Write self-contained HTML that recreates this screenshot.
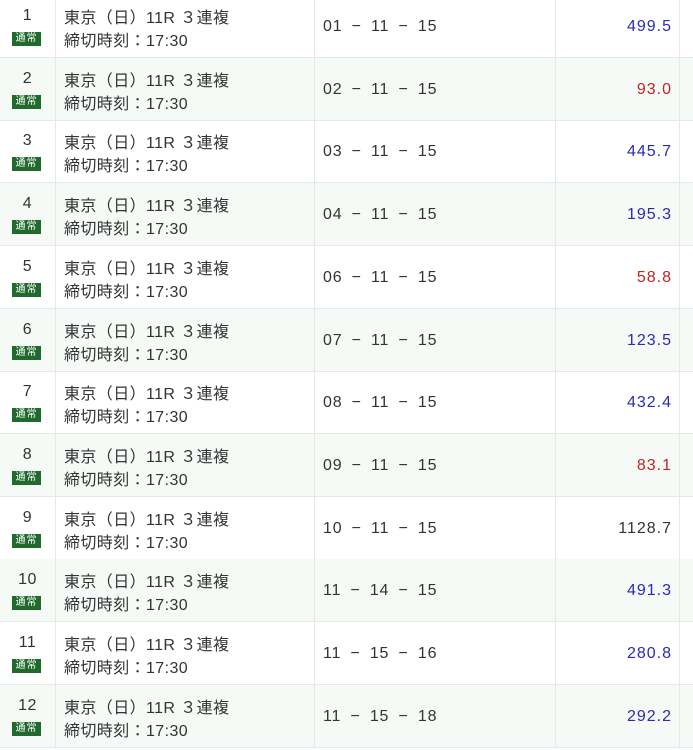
<!DOCTYPE html>
<html><head><meta charset="utf-8"><style>
body{margin:0;width:693px;height:750px;overflow:hidden;background:#fff;font-family:"Liberation Sans","Noto Sans CJK JP",sans-serif;color:#333;}
.r{position:absolute;left:0;width:693px;height:62px;border-bottom:1px solid #e6e9e6;}
.r.e{background:#f6faf6;}
.v{position:absolute;top:0;height:63px;width:1px;background:#e6e9e6;}
.n{position:absolute;left:0;width:55px;text-align:center;top:12px;font-size:16px;letter-spacing:0.5px;}
.b{position:absolute;left:12px;top:37px;width:29px;height:14px;background:#1f6a2c;color:#fff;font-size:10px;line-height:14px;text-align:center;letter-spacing:1px;}
.t{position:absolute;left:64px;top:12px;font-size:16px;line-height:23px;letter-spacing:0.4px;}
.c{position:absolute;left:323px;top:23px;font-size:16px;word-spacing:4px;letter-spacing:0.8px;}
.o{position:absolute;right:21px;top:23px;font-size:16px;letter-spacing:1px;}
.bl{color:#2a2ab8}.rd{color:#c02525}
</style></head><body>
<div class="r" style="top:-5px"><div class="v" style="left:55px"></div><div class="v" style="left:314px"></div><div class="v" style="left:555px"></div><div class="v" style="left:679px"></div><div class="n">1</div><div class="b">通常</div><div class="t">東京（日）11R ３連複<br>締切時刻：17:30</div><div class="c">01 − 11 − 15</div><div class="o bl">499.5</div></div>
<div class="r e" style="top:57.7px"><div class="v" style="left:55px"></div><div class="v" style="left:314px"></div><div class="v" style="left:555px"></div><div class="v" style="left:679px"></div><div class="n">2</div><div class="b">通常</div><div class="t">東京（日）11R ３連複<br>締切時刻：17:30</div><div class="c">02 − 11 − 15</div><div class="o rd">93.0</div></div>
<div class="r" style="top:120.4px"><div class="v" style="left:55px"></div><div class="v" style="left:314px"></div><div class="v" style="left:555px"></div><div class="v" style="left:679px"></div><div class="n">3</div><div class="b">通常</div><div class="t">東京（日）11R ３連複<br>締切時刻：17:30</div><div class="c">03 − 11 − 15</div><div class="o bl">445.7</div></div>
<div class="r e" style="top:183.1px"><div class="v" style="left:55px"></div><div class="v" style="left:314px"></div><div class="v" style="left:555px"></div><div class="v" style="left:679px"></div><div class="n">4</div><div class="b">通常</div><div class="t">東京（日）11R ３連複<br>締切時刻：17:30</div><div class="c">04 − 11 − 15</div><div class="o bl">195.3</div></div>
<div class="r" style="top:245.8px"><div class="v" style="left:55px"></div><div class="v" style="left:314px"></div><div class="v" style="left:555px"></div><div class="v" style="left:679px"></div><div class="n">5</div><div class="b">通常</div><div class="t">東京（日）11R ３連複<br>締切時刻：17:30</div><div class="c">06 − 11 − 15</div><div class="o rd">58.8</div></div>
<div class="r e" style="top:308.5px"><div class="v" style="left:55px"></div><div class="v" style="left:314px"></div><div class="v" style="left:555px"></div><div class="v" style="left:679px"></div><div class="n">6</div><div class="b">通常</div><div class="t">東京（日）11R ３連複<br>締切時刻：17:30</div><div class="c">07 − 11 − 15</div><div class="o bl">123.5</div></div>
<div class="r" style="top:371.2px"><div class="v" style="left:55px"></div><div class="v" style="left:314px"></div><div class="v" style="left:555px"></div><div class="v" style="left:679px"></div><div class="n">7</div><div class="b">通常</div><div class="t">東京（日）11R ３連複<br>締切時刻：17:30</div><div class="c">08 − 11 − 15</div><div class="o bl">432.4</div></div>
<div class="r e" style="top:433.9px"><div class="v" style="left:55px"></div><div class="v" style="left:314px"></div><div class="v" style="left:555px"></div><div class="v" style="left:679px"></div><div class="n">8</div><div class="b">通常</div><div class="t">東京（日）11R ３連複<br>締切時刻：17:30</div><div class="c">09 − 11 − 15</div><div class="o rd">83.1</div></div>
<div class="r" style="top:496.6px"><div class="v" style="left:55px"></div><div class="v" style="left:314px"></div><div class="v" style="left:555px"></div><div class="v" style="left:679px"></div><div class="n">9</div><div class="b">通常</div><div class="t">東京（日）11R ３連複<br>締切時刻：17:30</div><div class="c">10 − 11 − 15</div><div class="o">1128.7</div></div>
<div class="r e" style="top:559.3px"><div class="v" style="left:55px"></div><div class="v" style="left:314px"></div><div class="v" style="left:555px"></div><div class="v" style="left:679px"></div><div class="n">10</div><div class="b">通常</div><div class="t">東京（日）11R ３連複<br>締切時刻：17:30</div><div class="c">11 − 14 − 15</div><div class="o bl">491.3</div></div>
<div class="r" style="top:622px"><div class="v" style="left:55px"></div><div class="v" style="left:314px"></div><div class="v" style="left:555px"></div><div class="v" style="left:679px"></div><div class="n">11</div><div class="b">通常</div><div class="t">東京（日）11R ３連複<br>締切時刻：17:30</div><div class="c">11 − 15 − 16</div><div class="o bl">280.8</div></div>
<div class="r e" style="top:684.7px"><div class="v" style="left:55px"></div><div class="v" style="left:314px"></div><div class="v" style="left:555px"></div><div class="v" style="left:679px"></div><div class="n">12</div><div class="b">通常</div><div class="t">東京（日）11R ３連複<br>締切時刻：17:30</div><div class="c">11 − 15 − 18</div><div class="o bl">292.2</div></div>
</body></html>
